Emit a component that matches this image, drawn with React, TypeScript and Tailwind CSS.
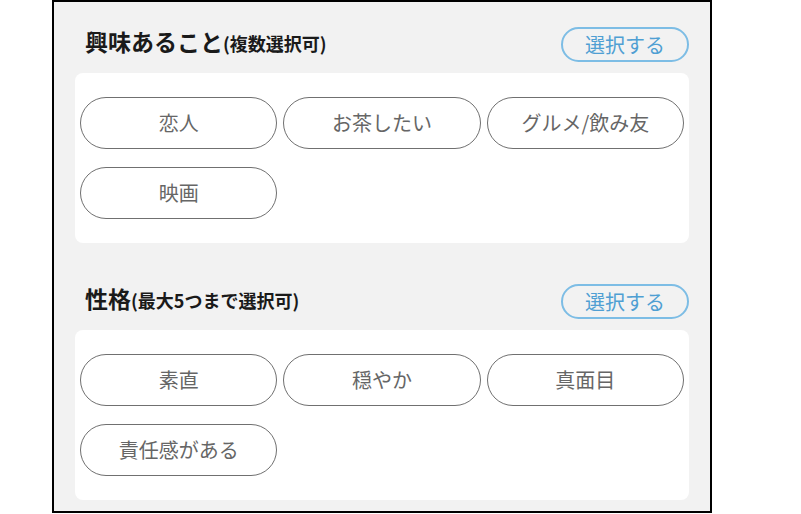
import React from 'react';

const jp = { fontFamily: '"Noto Sans CJK JP", "Noto Sans", sans-serif' };

interface SectionProps {
  title: string;
  note: string;
  tags: string[];
  className?: string;
}

function Tag({ label }: { label: string }) {
  return (
    <div className="h-[52px] flex items-center justify-center rounded-full border-[1.5px] border-[#707070] bg-white text-[20px] text-[#666]">
      {label}
    </div>
  );
}

/**
 * One block: heading + select button + white card with tag pills
 */
function TagSection({ title, note, tags, className = '' }: SectionProps) {
  return (
    <section className={className}>
      <div className="flex justify-between items-start">
        <h2 className="-mt-[2px] ml-[10px] font-bold text-[#1a1a1a] leading-[32px]">
          <span className="text-[23px]">{title}</span>
          <span className="text-[18px]">{note}</span>
        </h2>
        <button className="w-[128px] h-[35px] rounded-full border-2 border-[#7dbde5] text-[20px] leading-none text-[#4f9fd3]">
          選択する
        </button>
      </div>

      <div className="mt-[11px] bg-white rounded-lg px-[5px] pt-[24px] pb-[24px]">
        <div className="grid grid-cols-3 gap-x-[6px] gap-y-[18px]">
          {tags.map((tag) => (
            <Tag key={tag} label={tag} />
          ))}
        </div>
      </div>
    </section>
  );
}

export default function App() {
  return (
    <div className="w-[801px] h-[514px] bg-white" style={jp}>
      <div className="ml-[52px] w-[660px] h-[513px] border-2 border-black bg-[#f2f2f2] px-[21px] pt-[25px]">
        <TagSection
          title="興味あること"
          note="(複数選択可)"
          tags={['恋人', 'お茶したい', 'グルメ/飲み友', '映画']}
        />
        <TagSection
          className="mt-[41px]"
          title="性格"
          note="(最大5つまで選択可)"
          tags={['素直', '穏やか', '真面目', '責任感がある']}
        />
      </div>
    </div>
  );
}
